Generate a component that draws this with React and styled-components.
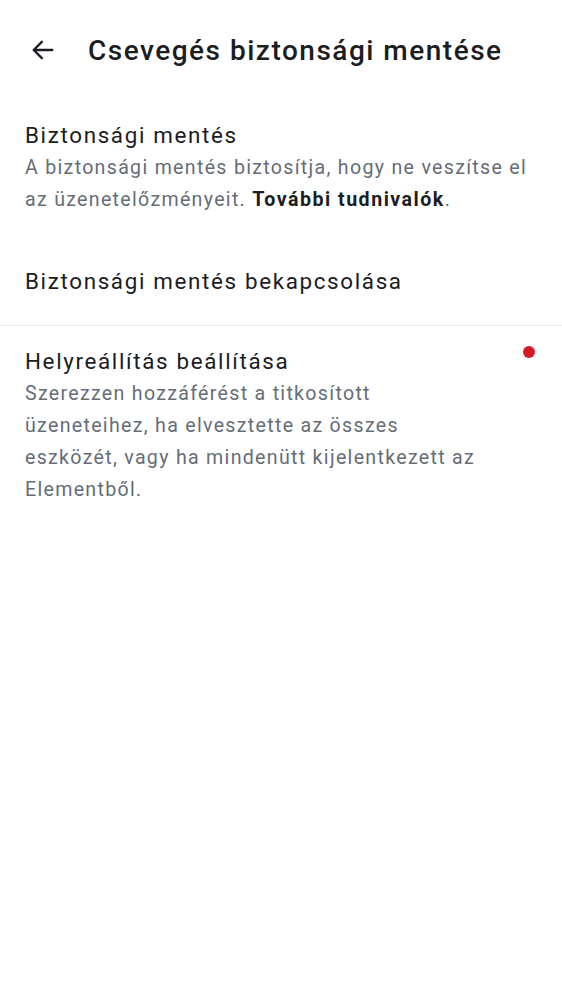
import React from "react";
import styled, { createGlobalStyle } from "styled-components";

const Global = createGlobalStyle`
  html, body {
    margin: 0;
    padding: 0;
    background: #ffffff;
  }
  body {
    font-family: Roboto, "Noto Sans", sans-serif;
    color: #1b1d22;
  }
`;

const Page = styled.div`
  width: 562px;
  min-height: 1000px;
  background: #ffffff;
`;

const Toolbar = styled.header`
  height: 100px;
  display: flex;
  align-items: center;
  padding: 0 0 0 27px;
  gap: 29px;
`;

const BackButton = styled.div`
  width: 32px;
  height: 32px;
  display: flex;
  align-items: center;
  justify-content: center;
  color: #1b1d22;
`;

const Title = styled.h1`
  margin: 0;
  font-size: 28px;
  font-weight: 500;
  letter-spacing: 1.5px;
`;

const Item = styled.div`
  display: flex;
  align-items: flex-start;
  padding: ${(p) => p.$pad || "18px 27px 18px 25px"};
  border-bottom: ${(p) => (p.$divider ? "1px solid #e9eaec" : "none")};
`;

const ItemBody = styled.div`
  flex: 1;
  max-width: ${(p) => p.$max || "none"};
`;

const ItemTitle = styled.div`
  font-size: 22.4px;
  line-height: 34px;
  letter-spacing: 1.65px;
  color: #1b1d22;
`;

const ItemDesc = styled.div`
  font-size: 19.6px;
  line-height: 32px;
  letter-spacing: 1.3px;
  color: #656d77;

  b {
    color: #1b1d22;
    font-weight: 700;
    letter-spacing: 1.5px;
  }
`;

const Dot = styled.span`
  width: 12px;
  height: 12px;
  border-radius: 50%;
  background: #d51928;
  margin: 2px 0 0 auto;
  flex-shrink: 0;
`;

function ArrowBack() {
  return (
    <svg width="28" height="28" viewBox="0 0 24 24" fill="none">
      <path
        d="M20 12H4.5M11 5l-7 7 7 7"
        stroke="currentColor"
        strokeWidth="2"
        strokeLinecap="round"
        strokeLinejoin="round"
      />
    </svg>
  );
}

export default function App() {
  return (
    <Page>
      <Global />
      <Toolbar>
        <BackButton>
          <ArrowBack />
        </BackButton>
        <Title>Csevegés biztonsági mentése</Title>
      </Toolbar>

      <Item $pad="18px 25px 24px">
        <ItemBody>
          <ItemTitle>Biztonsági mentés</ItemTitle>
          <ItemDesc>
            A biztonsági mentés biztosítja, hogy ne veszítse el az
            üzenetelőzményeit. <b>További tudnivalók</b>.
          </ItemDesc>
        </ItemBody>
      </Item>

      <Item $pad="24px 25px 27px" $divider>
        <ItemBody>
          <ItemTitle>Biztonsági mentés bekapcsolása</ItemTitle>
        </ItemBody>
      </Item>

      <Item $pad="18px 27px 18px 25px">
        <ItemBody $max="452px">
          <ItemTitle>Helyreállítás beállítása</ItemTitle>
          <ItemDesc>
            Szerezzen hozzáférést a titkosított üzeneteihez, ha elvesztette az
            összes eszközét, vagy ha mindenütt kijelentkezett az Elementből.
          </ItemDesc>
        </ItemBody>
        <Dot />
      </Item>
    </Page>
  );
}
